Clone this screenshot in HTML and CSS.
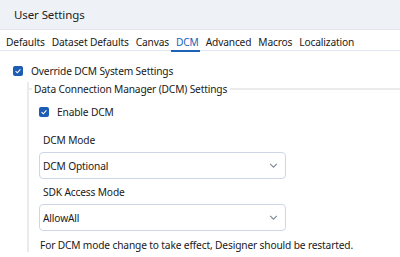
FILE: index.html
```html
<!DOCTYPE html>
<html>
<head>
    <title>User Settings</title>
    <link rel="stylesheet" href="styles.css">
</head>
<body>
    <div class="header">
        <h1>User Settings</h1>
    </div>

    <div class="tabs">
        <span class="tab">Defaults</span>
        <span class="tab">Dataset Defaults</span>
        <span class="tab">Canvas</span>
        <span class="tab active">DCM</span>
        <span class="tab">Advanced</span>
        <span class="tab">Macros</span>
        <span class="tab">Localization</span>
    </div>

    <div class="content">
        <label class="check">
            <span class="box"><svg viewBox="0 0 10 10"><path d="M2.6 5.2 L4.3 6.8 L7.4 3.4" /></svg></span>
            Override DCM System Settings
        </label>

        <div class="group">
            <div class="group-title">
                <span class="dash"></span>
                <span class="legend">Data Connection Manager (DCM) Settings</span>
                <span class="rule"></span>
            </div>

            <div class="group-body">
                <label class="check">
                    <span class="box"><svg viewBox="0 0 10 10"><path d="M2.6 5.2 L4.3 6.8 L7.4 3.4" /></svg></span>
                    Enable DCM
                </label>

                <div class="field">
                    <div class="field-label">DCM Mode</div>
                    <div class="select">
                        <span>DCM Optional</span>
                        <svg class="chev" viewBox="0 0 10 6"><path d="M1 1 L5 5 L9 1" /></svg>
                    </div>
                </div>

                <div class="field">
                    <div class="field-label">SDK Access Mode</div>
                    <div class="select">
                        <span>AllowAll</span>
                        <svg class="chev" viewBox="0 0 10 6"><path d="M1 1 L5 5 L9 1" /></svg>
                    </div>
                </div>

                <p class="note">For DCM mode change to take effect, Designer should be restarted.</p>
            </div>
        </div>
    </div>
</body>
</html>
```

FILE: styles.css
```css
body {
    font-family: "Noto Sans", "Open Sans", sans-serif;
    font-size: 10.2px;
    letter-spacing: -0.15px;
    color: #1a1a1a;
    margin: 0;
    padding: 0;
    background: white;
    width: 400px;
    height: 257px;
    overflow: hidden;
}
.header {
    background: #eef1f6;
    height: 29px;
    border-bottom: 1px solid #e2e5ea;
    padding-left: 14px;
    display: flex;
    align-items: center;
}
.header h1 {
    margin: 0;
    font-size: 11.5px;
    letter-spacing: -0.1px;
    font-weight: normal;
    color: #222;
}
.tabs {
    display: flex;
    gap: 7px;
    padding: 6px 0 0 6px;
    height: 14px;
    border-bottom: 1px solid #dfe6f0;
    white-space: nowrap;
}
.tab {
    line-height: 13px;
    position: relative;
    color: #1a1a1a;
}
.tab.active {
    color: #1c62b9;
}
.tab.active::after {
    content: "";
    position: absolute;
    left: -5px;
    right: -1px;
    bottom: -2px;
    height: 2px;
    background: #1c62b9;
}
.content {
    padding: 14px 0 0 13px;
}
.check {
    display: flex;
    align-items: center;
    gap: 8px;
    line-height: 12px;
}
.box {
    width: 10px;
    height: 10px;
    border-radius: 2px;
    background: #1c5db3;
    display: flex;
}
.box svg {
    width: 10px;
    height: 10px;
    fill: none;
    stroke: white;
    stroke-width: 1.1;
}
.group {
    margin: 5px 0 0 14px;
    border-left: 2px solid #ebebeb;
}
.group-title {
    display: flex;
    align-items: center;
    margin-left: -2px;
    line-height: 14px;
}
.dash {
    width: 5px;
    height: 2px;
    background: #ebebeb;
}
.legend {
    padding: 0 3px 0 2px;
}
.rule {
    flex: 1;
    height: 2px;
    background: #ebebeb;
}
.group-body {
    padding: 10px 0 0 10px;
}
.field {
    margin-top: 15px;
}
.field + .field {
    margin-top: 6px;
}
.field-label {
    padding-left: 4px;
    margin-bottom: 5px;
    line-height: 14px;
}
.select {
    width: 235px;
    height: 25px;
    border: 1px solid #cdd6e6;
    border-radius: 4px;
    display: flex;
    align-items: center;
    justify-content: space-between;
    padding: 0 7px 0 3px;
}
.chev {
    width: 9px;
    height: 5px;
    fill: none;
    stroke: #7e8794;
    stroke-width: 1.3;
}
.note {
    margin: 7px 0 0 1px;
    line-height: 14px;
}
```
